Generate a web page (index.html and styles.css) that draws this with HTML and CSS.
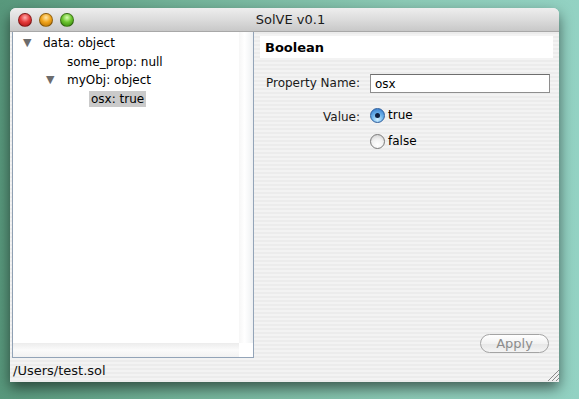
FILE: index.html
```html
<!DOCTYPE html>
<html lang="en">
<head>
  <meta charset="UTF-8">
  <title>SolVE v0.1</title>
  <link rel="stylesheet" href="styles.css">
</head>
<body>
  <div class="window">
    <div class="titlebar">
      <div class="lights">
        <span class="light red"></span>
        <span class="light yellow"></span>
        <span class="light green"></span>
      </div>
      <div class="title">SolVE v0.1</div>
    </div>

    <div class="content">
      <!-- tree of the .sol file -->
      <div class="tree-pane">
        <div class="tree-main">
          <ul class="tree">
            <li class="node"><span class="arrow">&#9660;</span>data: object</li>
            <li class="node depth1">some_prop: null</li>
            <li class="node depth1 open"><span class="arrow">&#9660;</span>myObj: object</li>
            <li class="node depth2"><span class="selected">osx: true</span></li>
          </ul>
          <div class="vscroll"></div>
        </div>
        <div class="hscroll-row">
          <div class="hscroll"></div>
          <div class="corner"></div>
        </div>
      </div>

      <!-- editor for the selected property -->
      <div class="detail">
        <div class="detail-head">Boolean</div>
        <div class="form">
          <label class="form-label">Property Name:</label>
          <input class="text-input" type="text" value="osx">
          <label class="form-label value-label">Value:</label>
          <div class="radios">
            <div class="radio-row"><span class="radio checked"></span>true</div>
            <div class="radio-row"><span class="radio"></span>false</div>
          </div>
        </div>
        <div class="actions">
          <button class="apply" disabled>Apply</button>
        </div>
      </div>
    </div>

    <div class="statusbar">
      <span class="path">/Users/test.sol</span>
      <svg class="grip" width="13" height="13" viewBox="0 0 13 13">
        <line x1="2" y1="13" x2="13" y2="2" stroke="#8a8a8a" stroke-width="1"/>
        <line x1="6" y1="13" x2="13" y2="6" stroke="#8a8a8a" stroke-width="1"/>
        <line x1="10" y1="13" x2="13" y2="10" stroke="#8a8a8a" stroke-width="1"/>
      </svg>
    </div>
  </div>
</body>
</html>
```

FILE: styles.css
```css
* {
  box-sizing: border-box;
  margin: 0;
  padding: 0;
}

body {
  width: 579px;
  height: 399px;
  overflow: hidden;
  padding: 8px 0 0 10px;
  font-family: 'DejaVu Sans', 'Open Sans', sans-serif;
  font-size: 12px;
  color: #000;
  background: linear-gradient(90deg, #58987c 0%, #72b298 30%, #8ccab6 70%, #93d2c3 100%);
}

.window {
  width: 549px;
  height: 374px;
  display: flex;
  flex-direction: column;
  border-radius: 6px 6px 0 0;
  background: repeating-linear-gradient(180deg, #ececec 0px, #ececec 2px, #f3f3f3 2px, #f3f3f3 4px);
  box-shadow: 0 6px 14px rgba(0, 0, 0, 0.55);
}

.titlebar {
  height: 24px;
  position: relative;
  display: flex;
  align-items: center;
  justify-content: center;
  border-radius: 6px 6px 0 0;
  background: linear-gradient(180deg, #eeeeee 0%, #dcdcdc 50%, #c8c8c8 100%);
  border-bottom: 1px solid #a8a8a8;
}

.lights {
  position: absolute;
  left: 8px;
  top: 5px;
  display: flex;
  gap: 7px;
}

.light {
  width: 14px;
  height: 14px;
  border-radius: 50%;
  border: 1px solid rgba(0, 0, 0, 0.35);
}

.red { background: radial-gradient(circle at 50% 30%, #ffb0b0 0%, #e63c3c 45%, #a40d0d 100%); }
.yellow { background: radial-gradient(circle at 50% 30%, #ffe6a8 0%, #f1a51c 45%, #b06b00 100%); }
.green { background: radial-gradient(circle at 50% 30%, #d8ffb0 0%, #6cc52f 45%, #2f7f07 100%); }

.title {
  font-size: 13px;
  color: #1a1a1a;
  padding-left: 12px;
}

.content {
  flex: 1;
  display: flex;
}

.tree-pane {
  width: 242px;
  margin-left: 2px;
  display: flex;
  flex-direction: column;
  border: 1px solid #93a4b8;
  border-top: none;
  background: #fff;
}

.tree-main {
  flex: 1;
  display: flex;
}

.tree {
  flex: 1;
  list-style: none;
  padding-top: 2px;
  background: #fff;
  box-shadow: 1px 1px 3px rgba(0, 0, 0, 0.15);
}

.node {
  height: 18.5px;
  line-height: 18px;
  padding-left: 30px;
  position: relative;
  white-space: nowrap;
}

.depth1 { padding-left: 54px; }
.depth2 { padding-left: 76px; }

.arrow {
  position: absolute;
  left: 10px;
  font-size: 11px;
  color: #6c6c6c;
}

.depth1 .arrow { left: 33px; }

.selected {
  background: #cacaca;
  padding: 1px 2px;
}

.vscroll {
  width: 14px;
  background: linear-gradient(90deg, #f6f6f6, #ffffff 40%, #eef0f2);
}

.hscroll-row {
  height: 14px;
  display: flex;
}

.hscroll {
  flex: 1;
  background: linear-gradient(180deg, #ececec, #fbfbfb 50%, #f2f2f2);
}

.corner {
  width: 14px;
  background: #fff;
}

.detail {
  flex: 1;
  display: flex;
  flex-direction: column;
  padding: 4px 6px 5px 6px;
}

.detail-head {
  height: 22px;
  line-height: 23px;
  background: #fff;
  padding-left: 5px;
  font-size: 13px;
  font-weight: bold;
}

.form {
  display: grid;
  grid-template-columns: 97px 180px;
  column-gap: 10px;
  row-gap: 12px;
  margin-top: 16px;
  padding-left: 3px;
}

.form-label {
  text-align: right;
  line-height: 19px;
  color: #1a1a1a;
}

.value-label {
  padding-top: 3px;
}

.text-input {
  height: 19px;
  border: 1px solid #8e8e8e;
  border-top-color: #6e6e6e;
  font-family: inherit;
  font-size: 12px;
  padding: 1px 3px 0 4px;
  background: #fff;
  outline: none;
}

.radios {
  display: flex;
  flex-direction: column;
  gap: 8px;
  padding-top: 1px;
}

.radio-row {
  display: flex;
  align-items: center;
  gap: 3px;
  height: 18px;
}

.radio {
  width: 15px;
  height: 15px;
  border-radius: 50%;
  border: 1px solid #7a7a7a;
  background: radial-gradient(circle at 50% 75%, #ffffff 0%, #f0f0f0 50%, #c8c8c8 100%);
  display: flex;
  align-items: center;
  justify-content: center;
}

.radio.checked {
  border-color: #2c5d9c;
  background: radial-gradient(circle at 50% 80%, #d2f0ff 0%, #6eb4ec 45%, #2f73c8 100%);
}

.radio.checked::after {
  content: "";
  width: 5px;
  height: 5px;
  border-radius: 50%;
  background: #102040;
}

.actions {
  margin-top: auto;
  display: flex;
  justify-content: flex-end;
}

.apply {
  width: 69px;
  height: 19px;
  border-radius: 10px;
  border: 1px solid #a4a4a4;
  background: linear-gradient(180deg, #ffffff 0%, #f2f2f2 50%, #e6e6e6 51%, #f4f4f4 100%);
  color: #8c8c8c;
  font-family: inherit;
  font-size: 13px;
  margin-right: 4px;
}

.statusbar {
  height: 24px;
  display: flex;
  align-items: center;
  justify-content: space-between;
  padding-left: 3px;
}

.path {
  font-size: 13px;
  color: #111;
}

.grip {
  align-self: flex-end;
  margin-bottom: 1px;
}
```
